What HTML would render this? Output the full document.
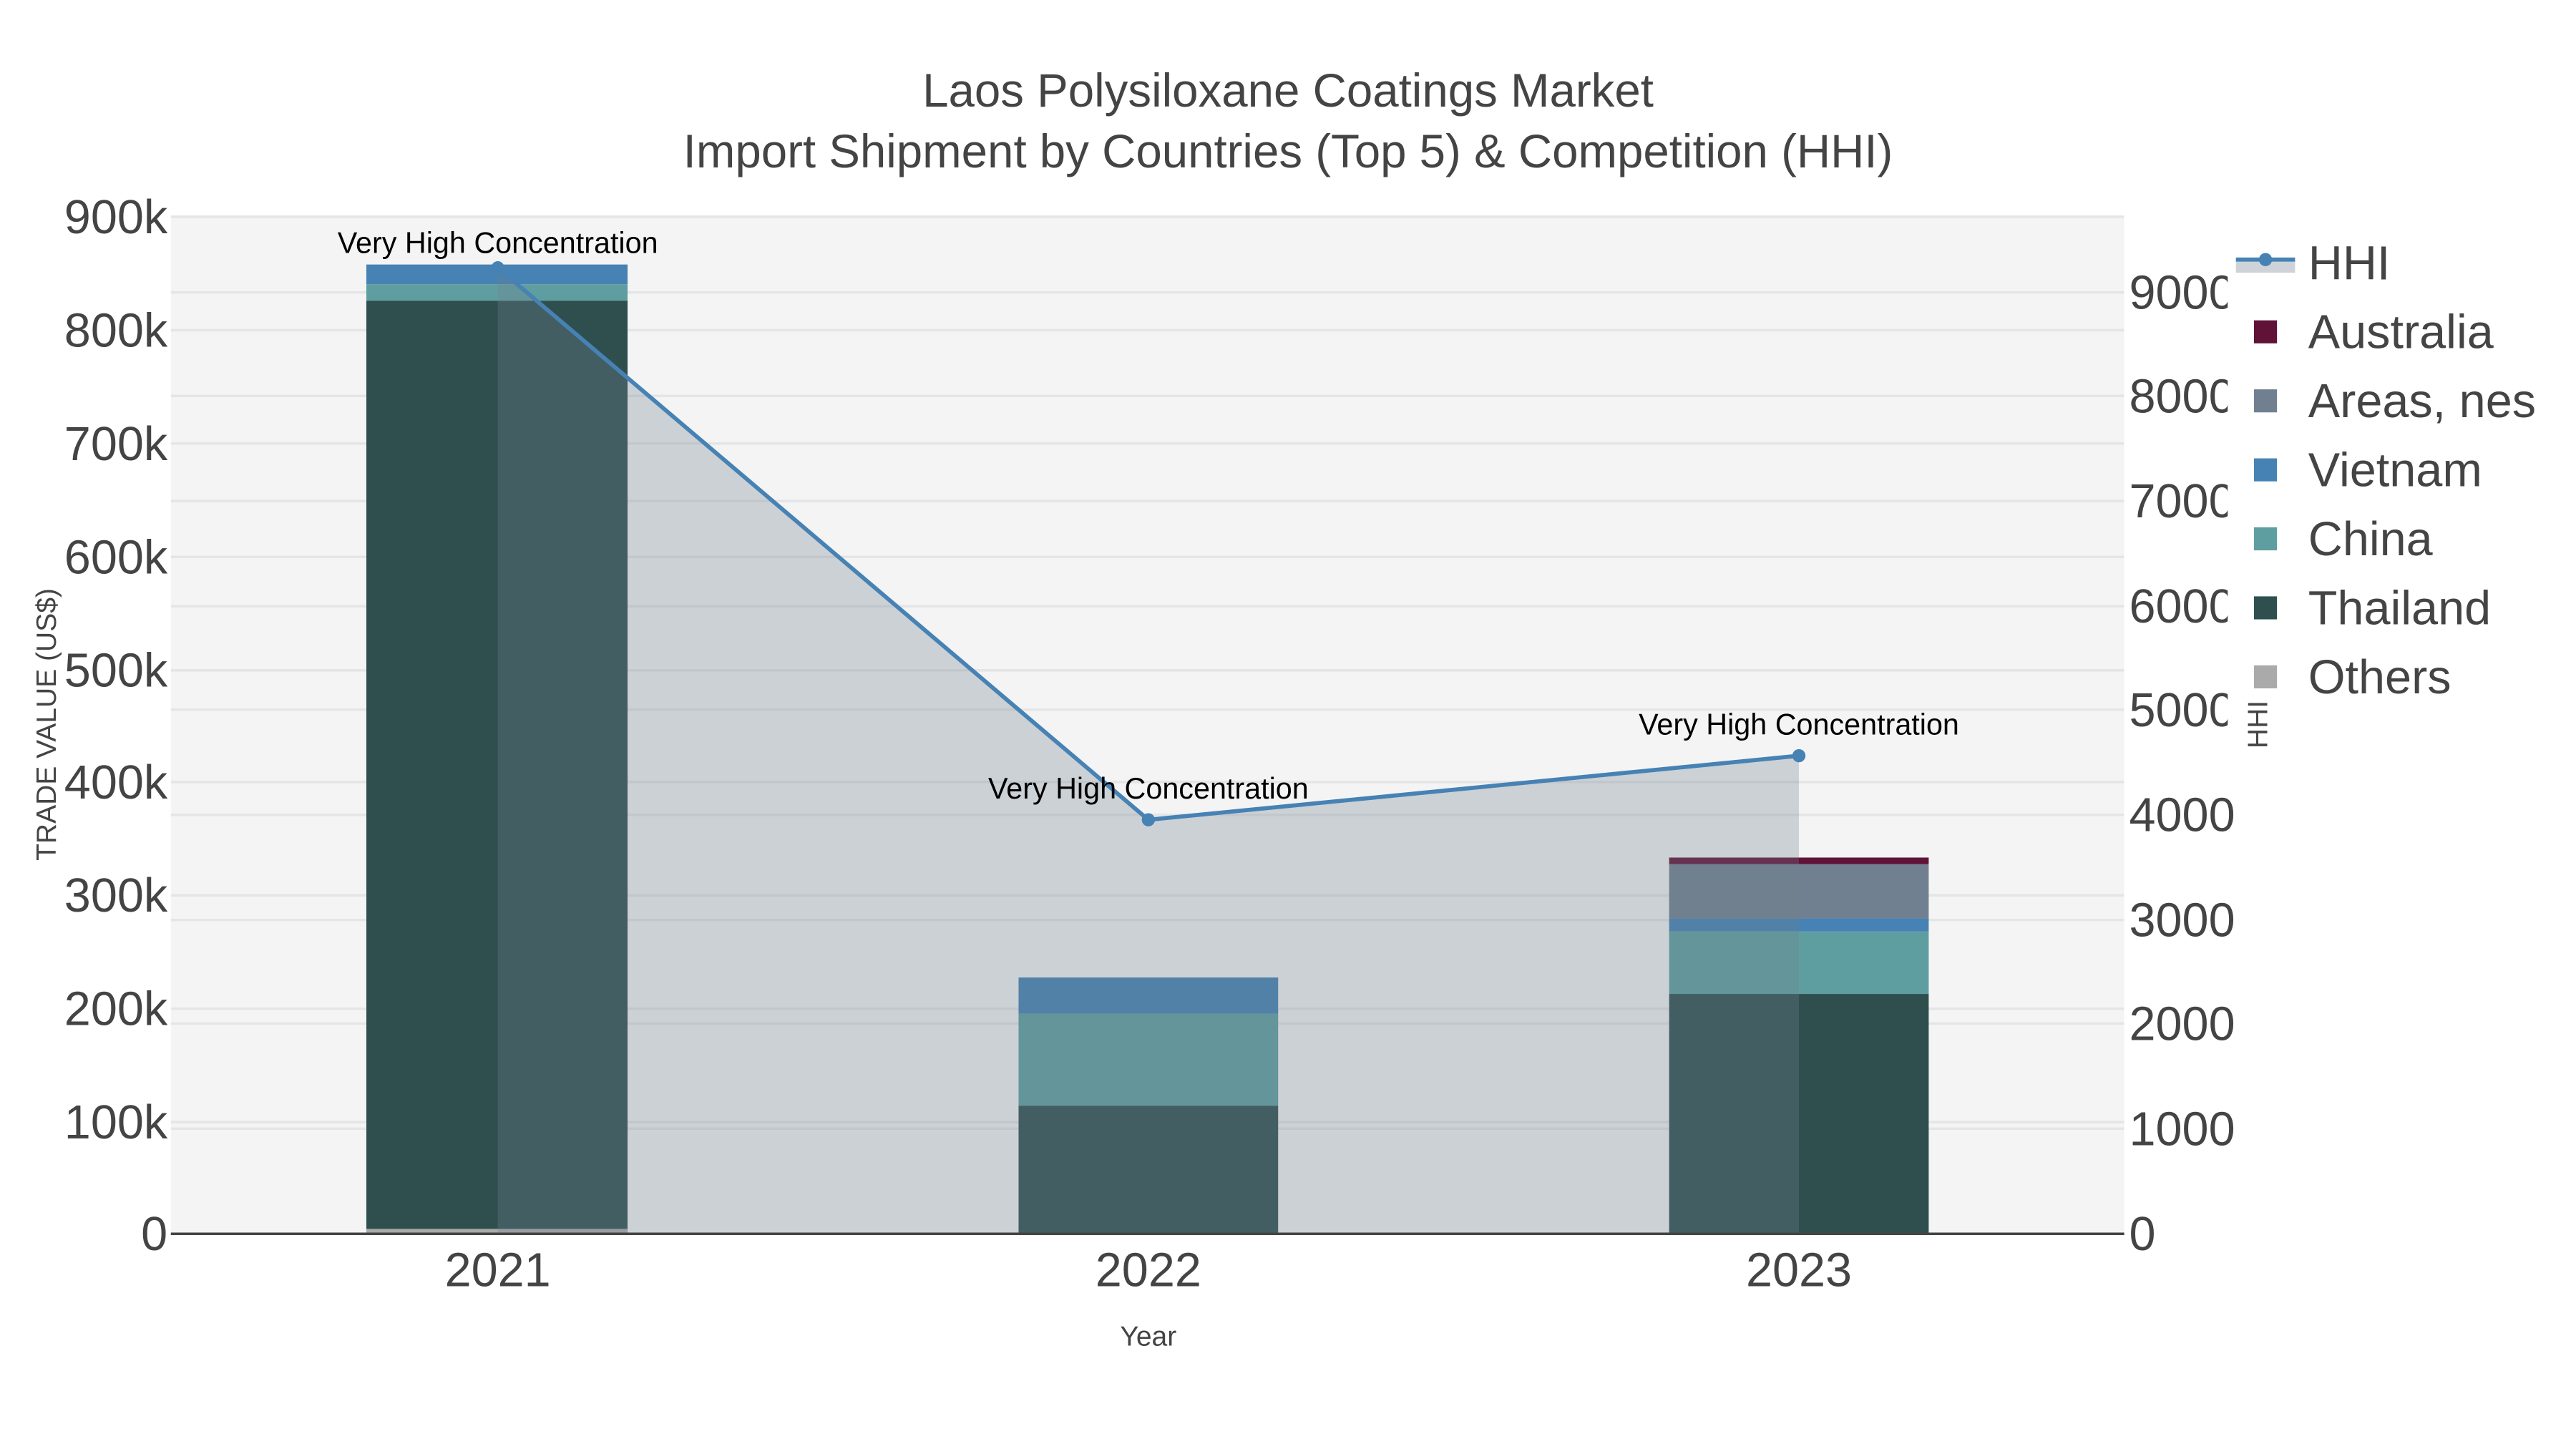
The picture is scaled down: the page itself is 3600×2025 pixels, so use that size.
<!DOCTYPE html>
<html><head><meta charset="utf-8"><style>html,body{margin:0;padding:0;background:#fff}svg{display:block}text{font-family:"Liberation Sans",Arial,sans-serif}</style></head>
<body>
<svg width="3600" height="2025" viewBox="0 0 1568 882" xmlns="http://www.w3.org/2000/svg">
<rect width="1568" height="882" fill="#fff"/>
<rect x="104" y="131" width="1189" height="620" fill="#f4f4f4"/>
<g stroke="#e5e5e5" stroke-width="1.5">
<line x1="104" x2="1293" y1="132" y2="132"/><line x1="104" x2="1293" y1="201" y2="201"/><line x1="104" x2="1293" y1="270" y2="270"/><line x1="104" x2="1293" y1="339" y2="339"/><line x1="104" x2="1293" y1="408" y2="408"/><line x1="104" x2="1293" y1="476" y2="476"/><line x1="104" x2="1293" y1="545" y2="545"/><line x1="104" x2="1293" y1="614" y2="614"/><line x1="104" x2="1293" y1="683" y2="683"/>
<line x1="104" x2="1293" y1="687" y2="687"/><line x1="104" x2="1293" y1="623" y2="623"/><line x1="104" x2="1293" y1="560" y2="560"/><line x1="104" x2="1293" y1="496" y2="496"/><line x1="104" x2="1293" y1="432" y2="432"/><line x1="104" x2="1293" y1="369" y2="369"/><line x1="104" x2="1293" y1="305" y2="305"/><line x1="104" x2="1293" y1="241" y2="241"/><line x1="104" x2="1293" y1="178" y2="178"/>
</g>
<rect x="223" y="183" width="159" height="568" fill="#2f4f4f"/>
<rect x="223" y="173" width="159" height="10" fill="#5f9ea0"/>
<rect x="223" y="161" width="159" height="12" fill="#4682b4"/>
<rect x="223" y="748" width="159" height="3" fill="#aaaaaa"/>
<rect x="620" y="673" width="158" height="78" fill="#2f4f4f"/>
<rect x="620" y="617" width="158" height="56" fill="#5f9ea0"/>
<rect x="620" y="595" width="158" height="22" fill="#4682b4"/>
<rect x="1016" y="605" width="158" height="146" fill="#2f4f4f"/>
<rect x="1016" y="567" width="158" height="38" fill="#5f9ea0"/>
<rect x="1016" y="559" width="158" height="8" fill="#4682b4"/>
<rect x="1016" y="526" width="158" height="33" fill="#708090"/>
<rect x="1016" y="522" width="158" height="4" fill="#601237"/>
<polygon points="303,751 303,163 699,499 1095,460 1095,751" fill="#708090" fill-opacity="0.3"/>
<polyline points="303,163 699,499 1095,460" fill="none" stroke="#4682b4" stroke-width="2.5"/>
<circle cx="303" cy="163" r="4" fill="#4682b4"/><circle cx="699" cy="499" r="4" fill="#4682b4"/><circle cx="1095" cy="460" r="4" fill="#4682b4"/>
<line x1="104" x2="1293" y1="751" y2="751" stroke="#444" stroke-width="1.5"/>
<g fill="#444" text-anchor="middle" font-size="28.5">
<text x="784" y="65">Laos Polysiloxane Coatings Market</text>
<text x="784" y="102">Import Shipment by Countries (Top 5) &amp; Competition (HHI)</text>
</g>
<g fill="#444" font-size="29" text-anchor="end">
<text x="102" y="142">900k</text><text x="102" y="211">800k</text><text x="102" y="280">700k</text><text x="102" y="349">600k</text><text x="102" y="418">500k</text><text x="102" y="486">400k</text><text x="102" y="555">300k</text><text x="102" y="624">200k</text><text x="102" y="693">100k</text><text x="102" y="761">0</text>
</g>
<g fill="#444" font-size="29">
<text x="1296" y="188">9000</text><text x="1296" y="251">8000</text><text x="1296" y="315">7000</text><text x="1296" y="379">6000</text><text x="1296" y="442">5000</text><text x="1296" y="506">4000</text><text x="1296" y="570">3000</text><text x="1296" y="633">2000</text><text x="1296" y="697">1000</text><text x="1296" y="761">0</text>
</g>
<g fill="#444" font-size="29" text-anchor="middle">
<text x="303" y="783">2021</text><text x="699" y="783">2022</text><text x="1095" y="783">2023</text>
</g>
<text x="699" y="819" fill="#444" font-size="17" text-anchor="middle">Year</text>
<text transform="translate(34,441) rotate(-90)" fill="#444" font-size="17" text-anchor="middle">TRADE VALUE (US$)</text>
<g fill="#000" font-size="18" text-anchor="middle">
<text x="303" y="154">Very High Concentration</text><text x="699" y="486">Very High Concentration</text><text x="1095" y="447">Very High Concentration</text>
</g>
<rect x="1356" y="140" width="212" height="310" fill="#fff"/>
<text transform="translate(1380,441) rotate(-90)" fill="#444" font-size="17" text-anchor="middle">HHI</text>
<rect x="1361" y="158" width="36" height="8" fill="#708090" fill-opacity="0.35"/>
<line x1="1361" x2="1397" y1="158" y2="158" stroke="#4682b4" stroke-width="2.5"/>
<circle cx="1379" cy="158" r="4" fill="#4682b4"/>
<rect x="1372" y="195" width="14" height="14" fill="#601237"/>
<rect x="1372" y="237" width="14" height="14" fill="#708090"/>
<rect x="1372" y="279" width="14" height="14" fill="#4682b4"/>
<rect x="1372" y="321" width="14" height="14" fill="#5f9ea0"/>
<rect x="1372" y="363" width="14" height="14" fill="#2f4f4f"/>
<rect x="1372" y="405" width="14" height="14" fill="#aaaaaa"/>
<g fill="#444" font-size="29">
<text x="1405" y="170">HHI</text><text x="1405" y="212">Australia</text><text x="1405" y="254">Areas, nes</text><text x="1405" y="296">Vietnam</text><text x="1405" y="338">China</text><text x="1405" y="380">Thailand</text><text x="1405" y="422">Others</text>
</g>
</svg>
</body></html>
